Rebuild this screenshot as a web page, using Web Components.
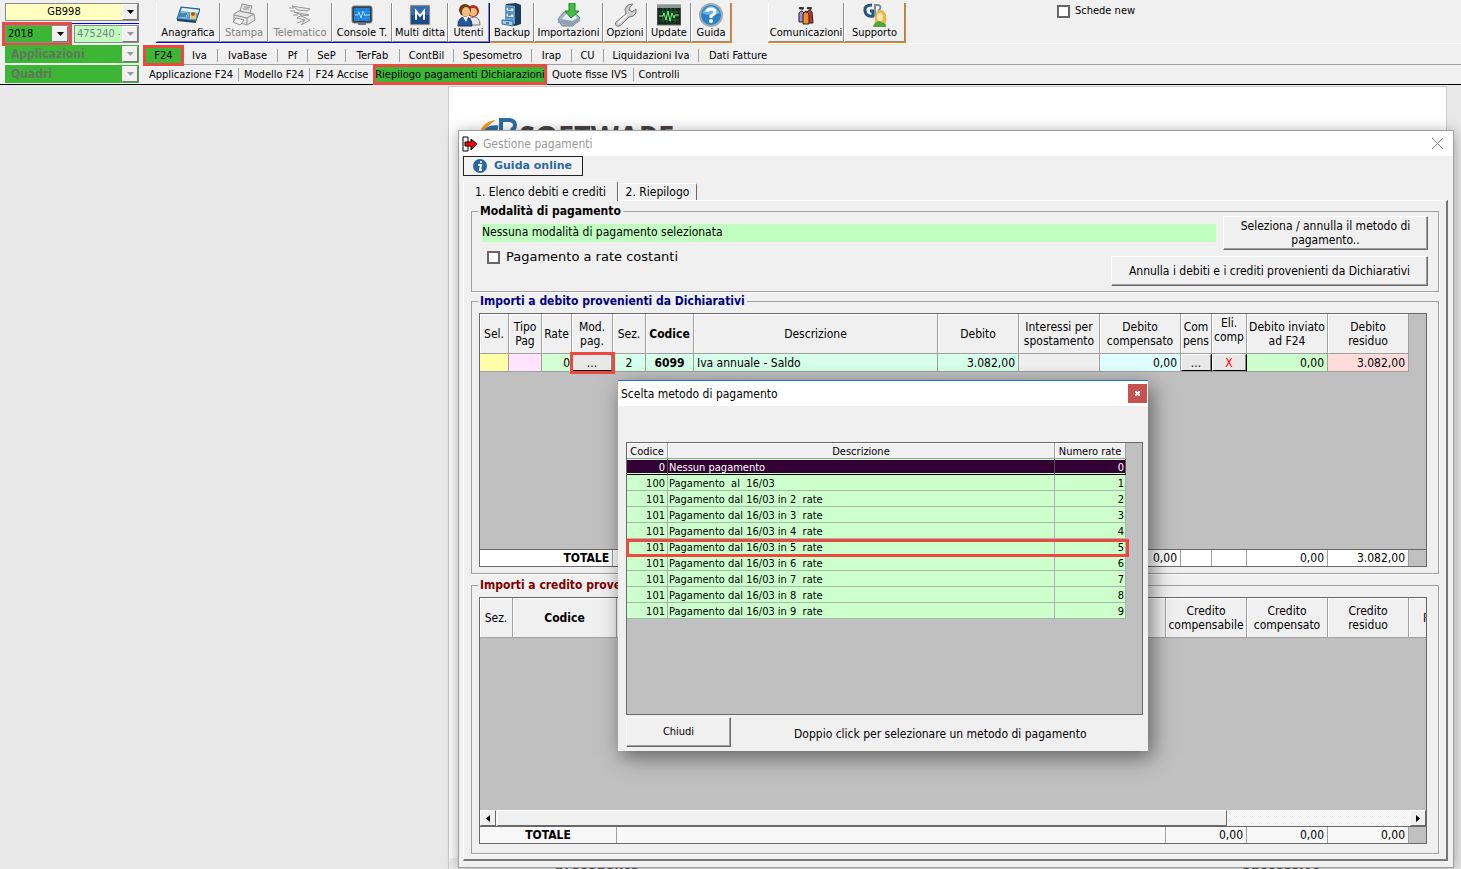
<!DOCTYPE html>
<html lang="it">
<head>
<meta charset="utf-8">
<title>GB Software - Gestione pagamenti</title>
<style>
  html, body { height: 100%; margin: 0; }
  body {
    font: 11px/14px "DejaVu Sans Condensed", "Noto Sans", sans-serif;
    color: #000; background: #e9e9e9; overflow: hidden;
    --face: #f0f0f0; --mark: #ec4a41; --green: #3cb634;
  }
</style>
</head>
<body>
<gb-app></gb-app>

<script>
const BASE = `
  *, *::before { box-sizing: border-box; }
  button, select, input { font: inherit; color: inherit; margin: 0; }
  button { cursor: pointer; }
`;

function define(name, render) {
  customElements.define(name, class extends HTMLElement {
    connectedCallback() {
      if (this.shadowRoot) return;
      const tpl = document.createElement('template');
      tpl.innerHTML = `<style>${BASE}</style>` + render(this);
      this.attachShadow({ mode: 'open' }).append(tpl.content.cloneNode(true));
    }
  });
}

/* ---------- toolbar pictures ---------- */
const ICONS = {
  card: `<path d="M5 4 24 6 20 18 1 16Z" fill="#5aa7d8" stroke="#27567f"/><path d="M6 5 23 7 22 10 5 8Z" fill="#e4f4ff"/><path d="M5 9 12 10 10 15 3 14Z" fill="#8fd0f5"/><rect x="14" y="9" width="6" height="7" fill="#f3c178"/><circle cx="17" cy="11" r="2" fill="#9b5a20"/><path d="M4 11h7M3 13h7" stroke="#123c66"/><path d="M1 16 20 18v2L1 18Z" fill="#1d3f60"/>`,
  printer: `<g fill="#e6e6e6" stroke="#8e8e8e"><path d="M8 9 10 1 20 3 18 10Z"/><path d="M2 11 7 8 22 11 23 17 15 22 2 18Z"/><path d="M2 12 15 15 22 11M15 15v6"/><path d="M4 15 12 17 8 22 1 19Z" fill="#f7f7f7"/><path d="M12 4h6M11 6h6"/></g>`,
  send: `<g fill="none" stroke="#979797"><path d="M4 3 22 6 19 8 10 7ZM6 9 21 12 13 13 22 17 13 22 17 17 9 15 14 12Z" fill="#ededed"/><path d="M1 5h5M2 8h5M5 12h5M9 20 17 17"/></g>`,
  monitor: `<rect x="2" y="3" width="20" height="17" rx="2" fill="#353c42" stroke="#787f85"/><rect x="4" y="5" width="16" height="13" fill="#1b80d8"/><path d="M5 12h3l1-3 2 6 2-7 2 5 1-1h4" stroke="#a6e5ff" fill="none"/><path d="M4 9h16M4 15h16M8 5v13M16 5v13" stroke="#4ba8ef" opacity=".5"/><path d="M8 20h8v2H8z" fill="#777"/>`,
  multi: `<rect x="2" y="2" width="20" height="20" fill="#1c4b8e" stroke="#f6cf9b"/><path d="M3 3h18v9H3z" fill="#356bb0"/><path d="M8 17V8l4 5 4-5v9" fill="none" stroke="#fff" stroke-width="2"/>`,
  users: `<circle cx="16" cy="8" r="6" fill="#b82d1c"/><circle cx="16" cy="9" r="4" fill="#f2bc83"/><path d="M11 22q0-8 6-8t6 8Z" fill="#e8e8e8" stroke="#777"/><circle cx="8" cy="7" r="6" fill="#6d3b10"/><ellipse cx="9" cy="9" rx="4" ry="5" fill="#f3bd83"/><path d="M1 23q0-9 7-9t7 9Z" fill="#2459a0" stroke="#16345f"/><path d="M6 14l3 5 2-5Z" fill="#fff"/>`,
  cabinet: `<path d="M6 1 16 0 21 2v19l-6 2-10-2Z" fill="#1b3d5a"/><path d="M5 2 15 3v18L5 19Z" fill="#6ba7d8"/><path d="M6 4 14 5v4L6 8ZM6 10 14 11v4L6 14Z" fill="#d6ecfc" stroke="#3e78a5"/><path d="M2 17 13 18v5L2 21Z" fill="#9acdf3" stroke="#2e6896"/><path d="M8 6h3M8 12h3M6 20h3" stroke="#234" />`,
  import: `<path d="M1 16 7 9h10l6 6-7 8H5Z" fill="#a9b8c4" stroke="#6d7e8b"/><path d="M5 16 9 11h8l3 4-5 3Z" fill="#e4edf3"/><path d="M1 16 16 18 23 15v3l-7 5L1 20Z" fill="#8fa2b0"/><path d="M12 0h6v8h4l-8 7-6-7h4Z" fill="#44bd43" stroke="#20842b"/>`,
  wrench: `<path d="M20 1 15 2 12 6 13 11 3 19Q1 22 4 23 6 24 8 22L16 14Q21 14 23 10V6L19 9 16 7 17 4Z" fill="#cfcfcf" stroke="#747474"/><path d="M14 12 5 20" stroke="#f6f6f6" stroke-width="2"/>`,
  update: `<rect x="0" y="2" width="24" height="20" fill="#1c241e" stroke="#66706a"/><path d="M0 2h24v3H0z" fill="#8d9892"/><path d="M2 9h20M2 13h20M2 17h20M6 5v15M10 5v15M14 5v15M18 5v15" stroke="#176a2b"/><path d="M2 13h4l1-3 2 7 2-9 2 10 2-8 2 5 1-3h4" fill="none" stroke="#72f07c"/>`,
  help: `<circle cx="12" cy="12" r="11" fill="#2a81c6" stroke="#a1adb5" stroke-width="2"/><path d="M3 10q9-14 18 0-9 4-18 0Z" fill="#6db2ea"/><path d="M8 9q0-3 4-3t4 3q0 2-4 4v2" fill="none" stroke="#fff" stroke-width="3"/><circle cx="12" cy="18" r="2" fill="#fff"/>`,
  people: `<path d="M5 10q3-4 5 0v9H5Z" fill="#9d8be0" stroke="#222"/><path d="M13 9q3-4 5 0l1 11h-5Z" fill="#c43424" stroke="#222"/><path d="M9 11q3-4 6 0v10H9Z" fill="#f68b20" stroke="#222"/><path d="M5 6q-1-2 1-2h3q2 0 0 3ZM13 6q-1-2 1-2h3q2 0 0 3ZM10 9q2-3 4 0Z" fill="#333"/>`,
  support: `<path d="M9 2Q1 2 2 8t8 5V8H7" fill="none" stroke="#25567f" stroke-width="3"/><path d="M12 12V2h4q3 2 0 5 4 2 0 5Z" fill="none" stroke="#7a8fa0" stroke-width="2"/><path d="M12 20q-1-14 6-13t5 13Z" fill="#e6b949"/><ellipse cx="17" cy="14" rx="3" ry="4" fill="#f9e6b4"/><path d="M10 24q1-5 6-6l7 3v3Z" fill="#54a537"/>`
};

define('gb-tool', el => `
  <style>
    :host { display: block; flex: none; }
    button { display: flex; flex-direction: column; align-items: center; justify-content: space-between;
      width: 100%; height: 39px; padding: 0 0 3px; line-height: 11px; white-space: nowrap; background: var(--face);
      border: solid; border-width: 0 1px 1px 1px; border-color: #fff #8c8c8c #8c8c8c #fff; }
    button:disabled { color: #808080; cursor: default; }
    svg { width: 24px; height: 24px; display: block; flex: none; }
  </style>
  <button type="button" ${el.hasAttribute('disabled') ? 'disabled' : ''}>
    <svg viewBox="0 0 24 24" aria-hidden="true">${ICONS[el.getAttribute('icon')]}</svg><slot></slot>
  </button>`);

define('gb-combo', el => {
  const off = el.hasAttribute('disabled');
  return `
  <style>
    :host { display: block; position: relative; height: 18px; min-width: 0; }
    select { appearance: none; display: block; width: 100%; height: 100%; border: 1px solid #8a8a8a; border-radius: 0;
      padding: 0 18px 0 2px; background: var(--fill, #ffffc0); outline: 0; opacity: 1; color: var(--ink, #000); }
    :host([center]) select { text-align-last: center; }
    :host([heavy]) select { font-weight: bold; font-size: 12px; padding-left: 5px; border-color: var(--fill); }
    :host([marked]) { outline: 3px solid var(--mark); }
    .arrow { position: absolute; top: 1px; right: 1px; bottom: 1px; width: 16px; background: var(--face);
      border: 1px solid; border-color: #fff #777 #777 #fff; display: grid; place-items: center; pointer-events: none; }
    svg { width: 7px; height: 4px; display: block; }
  </style>
  <select aria-label="${el.getAttribute('label')}" ${off ? 'disabled' : ''}><option>${el.getAttribute('value')}</option></select>
  <span class="arrow"><svg viewBox="0 0 7 4" aria-hidden="true"><path d="M0 0h7L3.500 4Z" fill="${off ? '#999' : '#000'}"/></svg></span>`;
});

define('gb-header', () => {
  const link = ([t, w, cls]) => `<a href="#" class="${cls || ''}" style="width:${w}px">${t}</a>`;
  const areas = [['F24', 35, 'on'], ['Iva', 36], ['IvaBase', 60], ['Pf', 30], ['SeP', 38], ['TerFab', 54], ['ContBil', 54],
    ['Spesometro', 78], ['Irap', 40], ['CU', 32], ['Liquidazioni Iva', 95], ['Dati Fatture', 78, 'last']];
  const forms = [['Applicazione F24', 95], ['Modello F24', 71], ['F24 Accise', 64, 'last'], ['Riepilogo pagamenti Dichiarazioni', 170, 'on'],
    ['Quote fisse IVS', 88], ['Controlli', 50, 'last']];
  return `
  <style>
    :host { display: grid; grid-template-columns: 144px minmax(0, 1fr); height: 85px; background: var(--face);
      border-bottom: 1px solid #000; }
    .filters { display: grid; grid-template-rows: 21px 20px 20px 20px; padding: 3px 5px 0; align-items: center; }
    .firm { height: 21px; border-bottom: 1px solid #00f; }
    .pair { display: grid; grid-template-columns: 64px 65px; gap: 5px; }
    .green { --fill: var(--green); --ink: #60785e; }
    .right { display: grid; grid-template-rows: 44px 21px 19px; }
    .tools { display: flex; padding: 3px 0 0 12px; align-items: flex-start; border-bottom: 1px solid #fff; }
    .set { display: flex; border: solid #0000e6; border-width: 0 1px 2px 0; height: 40px; }
    .set.orange { border-color: #ff8000; }
    .gap { width: 36px; }
    .new { margin-left: 151px; display: flex; gap: 5px; align-items: center; height: 16px; }
    input { appearance: none; width: 13px; height: 13px; border: 2px solid #666; background: #fff; }
    nav { display: flex; align-items: center; }
    .areas { border-bottom: 1px solid #a0a0a0; padding: 3px 0 0 1px; }
    a { color: inherit; text-decoration: none; text-align: center; white-space: nowrap; border-right: 1px solid #a0a0a0; line-height: 13px; }
    a.last { border: 0; }
    a.on { background: var(--green); outline: 3px solid var(--mark); border: 0; line-height: 17px; z-index: 1; outline-offset: -1px; margin: 0 1px; }
    .areas a.on { line-height: 15px; outline-offset: 0; }
  </style>
  <div class="filters">
    <div class="firm"><gb-combo label="Ditta" value="GB998" center></gb-combo></div>
    <div class="pair">
      <gb-combo label="Anno" value="2018" marked style="--fill:var(--green)"></gb-combo>
      <gb-combo label="Codice" value="475240 -" disabled style="--fill:#c0ffc0;--ink:#808080"></gb-combo>
    </div>
    <gb-combo class="green" label="Applicazioni" value="Applicazioni" heavy disabled></gb-combo>
    <gb-combo class="green" label="Quadri" value="Quadri" heavy disabled></gb-combo>
  </div>
  <div class="right">
    <div class="tools">
      <div class="set">
        <gb-tool icon="card" style="width:64px">Anagrafica</gb-tool>
        <gb-tool icon="printer" style="width:48px" disabled>Stampa</gb-tool>
        <gb-tool icon="send" style="width:64px" disabled>Telematico</gb-tool>
        <gb-tool icon="monitor" style="width:60px">Console T.</gb-tool>
        <gb-tool icon="multi" style="width:56px">Multi ditta</gb-tool>
        <gb-tool icon="users" style="width:41px">Utenti</gb-tool>
      </div>
      <div class="set orange">
        <gb-tool icon="cabinet" style="width:44px">Backup</gb-tool>
        <gb-tool icon="import" style="width:69px">Importazioni</gb-tool>
        <gb-tool icon="wrench" style="width:44px">Opzioni</gb-tool>
        <gb-tool icon="update" style="width:44px">Update</gb-tool>
        <gb-tool icon="help" style="width:40px">Guida</gb-tool>
      </div>
      <div class="gap"></div>
      <div class="set orange">
        <gb-tool icon="people" style="width:76px">Comunicazioni</gb-tool>
        <gb-tool icon="support" style="width:61px">Supporto</gb-tool>
      </div>
      <label class="new"><input type="checkbox">Schede new</label>
    </div>
    <nav class="areas" aria-label="Applicazioni">${areas.map(link).join('')}</nav>
    <nav class="forms" aria-label="Quadri">${forms.map(link).join('')}</nav>
  </div>`;
});

/* ---------- shared pieces ---------- */
define('gb-button', () => `
  <style>
    :host { display: block; flex: none; }
    button { width: 100%; height: 100%; padding: 0 12px; line-height: 14px; background: var(--face);
      border: 1px solid; border-color: #fff #696969 #696969 #fff; box-shadow: inset -1px -1px #a0a0a0; }
  </style>
  <button type="button"><slot></slot></button>`);

define('gb-group', el => `
  <style>
    :host { display: flex; flex-direction: column; min-height: 0; }
    fieldset { flex: 1; min-width: 0; min-height: 0; margin: 0; padding: var(--pad, 8px 11px 6px 7px);
      border: 1px solid #a0a0a0; box-shadow: 1px 1px #fff; display: flex; flex-direction: column; }
    legend { padding: 0 2px; margin-left: -1px; line-height: 7px; font-weight: bold; color: var(--title, #000); white-space: nowrap; }
  </style>
  <fieldset><legend>${el.getAttribute('heading')}</legend><slot></slot></fieldset>`);

const GRID = `
  :host { display: flex; flex-direction: column; flex: 1; min-height: 0; background: #c0c0c0; border: 1px solid #696969; overflow: hidden; }
  .fill { flex: 1; }
  table { border-collapse: separate; border-spacing: 0; table-layout: fixed; width: 100%; }
  th, td { padding: 0 3px; border-right: 1px solid #a0a0a0; border-bottom: 1px solid #a0a0a0; overflow: hidden; white-space: nowrap; }
  th { font-weight: normal; background: var(--face); padding: 1px 0 0; box-shadow: inset 1px 1px #fff; }
  td { background: var(--cell); text-align: left; }
  .c { text-align: center; } .n { text-align: right; } .b { font-weight: bold; }
  .none { background: transparent; border: 0; box-shadow: none; }
  .total { border-top: 1px solid #696969; background: #c0c0c0; }
  .total td { height: 16px; border-bottom: 0; --cell: #fff; }
`;
const cols = list => `<colgroup>${list.map(w => `<col${w ? ` style="width:${w}px"` : ''}>`).join('')}</colgroup>`;

define('gb-debits', () => {
  const c = cols([29, 33, 30, 41, 33, 48, 0, 81, 81, 81, 31, 35, 81, 81, 17]);
  return `
  <style>${GRID}
    th { height: 40px; } .row td { height: 18px; }
    td.act { padding: 0; overflow: visible; }
    td button { display: block; width: 100%; height: 17px; padding: 0; line-height: 14px; background: #e8e8e8; border: 1px solid;
      border-color: #fff #888 #000 #fff; }
    .mark { outline: 3px solid var(--mark); outline-offset: -1px; position: relative; }
    .red { color: #f00; } th.up { padding-bottom: 8px; }
    .row .act { border-right-color: #000; }
  </style>
  <table>${c}
    <thead><tr><th>Sel.</th><th>Tipo<br>Pag</th><th>Rate</th><th>Mod.<br>pag.</th><th>Sez.</th><th class="b">Codice</th><th>Descrizione</th>
      <th>Debito</th><th>Interessi per<br>spostamento</th><th>Debito<br>compensato</th><th>Com<br>pens</th><th class="up">Eli.<br>comp</th>
      <th>Debito inviato<br>ad F24</th><th>Debito<br>residuo</th><th class="none"></th></tr></thead>
    <tbody><tr class="row">
      <td style="--cell:#ffffaa"></td><td style="--cell:#ffe3ff"></td><td class="n" style="--cell:#d4ffd4;padding-right:1px">0</td>
      <td class="act mark"><button type="button" aria-label="Modalità di pagamento">...</button></td>
      <td class="c" style="--cell:#d7ffeb">2</td><td class="c b" style="--cell:#d7ffeb">6099</td><td style="--cell:#d7ffeb">Iva annuale - Saldo</td>
      <td class="n" style="--cell:#d7ffeb">3.082,00</td><td style="--cell:#f0f0f0"></td><td class="n" style="--cell:#e0ffff">0,00</td>
      <td class="act"><button type="button" aria-label="Compensa">...</button></td><td class="act"><button type="button" class="red">X</button></td>
      <td class="n" style="--cell:#ccffcc">0,00</td><td class="n" style="--cell:#ffdcdc">3.082,00</td><td class="none"></td></tr></tbody>
  </table>
  <div class="fill"></div>
  <table class="total">${c}<tbody><tr><td colspan="4" class="n b">TOTALE</td><td colspan="3"></td><td></td><td></td><td class="n">0,00</td><td></td><td></td>
    <td class="n">0,00</td><td class="n">3.082,00</td><td class="none"></td></tr></tbody></table>`;
});

define('gb-credits', () => {
  const c = cols([33, 104, 0, 81, 81, 81, 17]);
  return `
  <style>${GRID}
    th { height: 40px; }
    .total td { --cell: #f8f8f8; }
    th.cut { text-align: left; padding-left: 14px; border-right: 0; }
    .scroll { display: flex; height: 16px; background: repeating-conic-gradient(#fff 0 25%, #eee 0 50%) 0 0 / 2px 2px; }
    .scroll button { width: 16px; padding: 0; display: grid; place-items: center; background: var(--face); border: 1px solid; border-color: #fff #696969 #696969 #fff; }
    .thumb { flex: 732; background: var(--face); border: 1px solid; border-color: #fff #696969 #696969 #fff; margin-left: 1px; }
    .track { flex: 184; }
    svg { width: 4px; height: 7px; display: block; }
  </style>
  <table>${c}<thead><tr><th>Sez.</th><th class="b">Codice</th><th></th><th>Credito<br>compensabile</th><th>Credito<br>compensato</th>
    <th>Credito<br>residuo</th><th class="cut">P</th></tr></thead></table>
  <div class="fill"></div>
  <div class="scroll">
    <button type="button" aria-label="Scorri a sinistra"><svg viewBox="0 0 4 7"><path d="M4 0v7L0 3.500Z"/></svg></button>
    <div class="thumb"></div><div class="track"></div>
    <button type="button" aria-label="Scorri a destra"><svg viewBox="0 0 4 7"><path d="M0 0v7l4-3.500Z"/></svg></button>
  </div>
  <table class="total">${c}<tbody><tr><td colspan="2" class="c b">TOTALE</td><td></td><td class="n">0,00</td><td class="n">0,00</td><td class="n">0,00</td>
    <td class="none"></td></tr></tbody></table>`;
});

define('gb-methods', () => {
  const rows = [[0, 'Nessun pagamento', 0], [100, 'Pagamento  al  16/03', 1]];
  for (let i = 2; i < 10; i++) rows.push([101, `Pagamento dal 16/03 in ${i}  rate`, i]);
  return `
  <style>${GRID}
    :host { --cell: #ccffcc; }
    table { line-height: 13px; }
    th, td { height: 16px; padding: 1px 1px 0; } td { white-space: pre; border-color: #a8b8a8; } td:first-child { padding-right: 2px; }
    tr.sel td { background: #330033; color: #fff; border-right-color: #555; border-bottom: 1px solid #000; box-shadow: inset 0 1px #ccffcc, inset 0 -1px #ccffcc; }
    tr.pick { position: relative; }
    tr.pick td { overflow: visible; }
    tr.pick td:first-child::before { content: ""; position: absolute; inset: 0 13px -2px -1px; border: 3px solid var(--mark); pointer-events: none; }
    :host { overflow: visible; }
  </style>
  <table>${cols([41, 0, 71, 16])}
    <thead><tr><th>Codice</th><th>Descrizione</th><th>Numero rate</th><th class="none"></th></tr></thead>
    <tbody>${rows.map((r, i) => `<tr class="${i === 0 ? 'sel' : i === 5 ? 'pick' : ''}"><td class="n">${r[0]}</td><td>${r[1]}</td><td class="n">${r[2]}</td></tr>`).join('')}</tbody>
  </table>`;
});

/* ---------- windows ---------- */
define('gb-payments', () => `
  <style>
    :host { display: flex; flex-direction: column; background: var(--face); border: 1px solid #a0a0a0;
      box-shadow: 0 2px 14px rgba(0,0,0,.35); font-size: 12px; }
    header { display: flex; align-items: center; height: 25px; flex: none; background: #fff; padding: 0 9px 0 3px; color: #999; }
    header svg { width: 16px; height: 16px; margin-right: 5px; }
    header button { margin-left: auto; width: 12px; height: 12px; padding: 0; border: 0; background: none; }
    header button svg { width: 11px; height: 11px; display: block; margin: 0; }
    .body { flex: 1; min-height: 0; display: flex; flex-direction: column; padding: 0 5px 6px 4px; }
    .guide { align-self: flex-start; display: flex; align-items: center; gap: 7px; width: 120px; height: 20px; padding: 0 0 0 9px; background: #f3f3f3;
      border: 1px solid #222; color: #2b68a0; font-family: "DejaVu Sans", sans-serif; font-size: 11px; font-weight: bold; white-space: nowrap; text-decoration: none; }
    .guide svg { width: 14px; height: 14px; }
    .tabs { display: flex; align-items: flex-end; height: 19px; margin-top: 5px; flex: none; }
    .tabs button { height: 17px; padding: 0; background: var(--face); border: 1px solid; border-color: #fff #696969 transparent #fff; border-bottom: 0; border-radius: 2px 2px 0 0; white-space: nowrap; width: 79px; }
    .tabs button.on { height: 20px; margin-bottom: -1px; width: 155px; z-index: 1; }
    .panel { flex: 1; min-height: 0; display: flex; flex-direction: column; padding: 7px 7px 5px 7px; border: solid; border-width: 1px 2px 2px 1px; border-color: #fff #777 #777 #fff; }
    .one { --pad: 1px 10px 0 7px; flex: none; height: 84px; }
    .two { --title: #000080; margin-top: 6px; flex: 276; }
    .three { --title: #800000; margin-top: 8px; flex: 272; --pad: 8px 11px 9px 7px; }
    .line { display: flex; align-items: center; gap: 7px; padding-left: 3px; }
    .status { flex: 1; height: 18px; line-height: 16px; background: #c0ffc0; }
    .rates { align-items: flex-start; justify-content: space-between; padding-left: 8px; }
    .rates label { display: flex; align-items: center; gap: 6px; height: 14px; font-family: "DejaVu Sans", sans-serif; font-size: 13px; }
    input { appearance: none; width: 13px; height: 13px; border: 2px solid #666; background: #fff; }
    .method { width: 205px; height: 34px; }
    .undo { width: 317px; height: 30px; margin-top: 6px; }
  </style>
  <header>
    <svg viewBox="0 0 16 16" aria-hidden="true"><path d="M1 1h5v14H1z" fill="#fff" stroke="#000"/><path d="M3 6h6V3l6 5-6 6v-4H3Z" fill="#f00" stroke="#000"/></svg>
    Gestione pagamenti
    <button type="button" aria-label="Chiudi"><svg viewBox="0 0 11 11"><path d="M0 0 11 11M11 0 0 11" stroke="#888"/></svg></button>
  </header>
  <div class="body">
    <a class="guide" href="#"><svg viewBox="0 0 14 14" aria-hidden="true"><circle cx="7" cy="7" r="7" fill="#2b68a0"/><circle cx="8" cy="3" r="1" fill="#fff"/><path d="M5 6h3L7 11h2" stroke="#fff" stroke-width="2" fill="none"/></svg>Guida online</a>
    <div class="tabs" role="tablist"><button type="button" role="tab" aria-selected="true" class="on">1. Elenco debiti e crediti</button><button type="button" role="tab">2. Riepilogo</button></div>
    <div class="panel">
      <gb-group class="one" heading="Modalità di pagamento">
        <div class="line"><div class="status">Nessuna modalità di pagamento selezionata</div><gb-button class="method">Seleziona / annulla il metodo di pagamento..</gb-button></div>
        <div class="line rates"><label><input type="checkbox">Pagamento a rate costanti</label><gb-button class="undo">Annulla i debiti e i crediti provenienti da Dichiarativi</gb-button></div>
      </gb-group>
      <gb-group class="two" heading="Importi a debito provenienti da Dichiarativi"><gb-debits></gb-debits></gb-group>
      <gb-group class="three" heading="Importi a credito provenienti da Dichiarativi"><gb-credits></gb-credits></gb-group>
    </div>
  </div>`);

define('gb-chooser', () => `
  <style>
    :host { display: flex; flex-direction: column; background: var(--face); border-top: 1px solid #1a78d0; box-shadow: 4px 6px 20px rgba(0,0,0,.5); font-size: 12px; }
    header { display: flex; align-items: center; justify-content: space-between; height: 25px; background: #fff; padding: 0 1px 0 3px; }
    header button { width: 19px; height: 19px; padding: 0; border: 0; background: #c75050; display: grid; place-items: center; }
    header svg { width: 5px; height: 5px; }
    .body { flex: 1; display: flex; flex-direction: column; padding: 36px 5px 4px 8px; }
    gb-methods { font-size: 11px; }
    footer { display: flex; align-items: center; gap: 63px; margin-top: 2px; }
    footer span { padding-top: 3px; }
    .close { width: 105px; height: 30px; font-size: 11px; }
  </style>
  <header>Scelta metodo di pagamento<button type="button" aria-label="Chiudi"><svg viewBox="0 0 5 5"><path d="M0 0 5 5M5 0 0 5" stroke="#fff" stroke-width="2"/></svg></button></header>
  <div class="body"><gb-methods></gb-methods>
    <footer><gb-button class="close">Chiudi</gb-button><span>Doppio click per selezionare un metodo di pagamento</span></footer></div>`);

define('gb-page', () => `
  <style>
    :host { display: flex; flex-direction: column; justify-content: space-between; background: #fff; border: 1px solid #ccc; border-bottom: 0; }
    .logo { display: flex; align-items: flex-start; padding: 30px 0 0 30px; color: #484244; font: bold 29px/38px "Open Sans", sans-serif; }
    .logo svg { width: 40px; height: 34px; }
    .steps { display: flex; justify-content: space-between; padding: 0 125px 0 106px; color: #555; font: bold 13px/14px "DejaVu Sans", sans-serif; background: #f0f0f0; height: 11px; }
  </style>
  <div class="logo"><svg viewBox="0 0 40 34" aria-hidden="true"><path d="M0 17Q4 4 17 3 7 9 5 18Z" fill="#f09a2e"/><path d="M19 11Q7 9 6 20t13 9" fill="none" stroke="#2c6da8" stroke-width="5"/><path d="M22 26V3h9q5 1 5 5t-4 5q6 1 6 7t-7 6Z" fill="none" stroke="#2c6da8" stroke-width="4"/></svg>SOFTWARE</div>
  <div class="steps"><span>precedente</span><span>successivo</span></div>`);

define('gb-app', () => `
  <style>
    :host { display: flex; flex-direction: column; height: 100vh; }
    main { flex: 1; position: relative; min-height: 0; display: flex; overflow: hidden; }
    gb-page { flex: 1; margin: 1px 14px 0 448px; }
    gb-payments { position: absolute; left: 458px; right: 7px; top: 45px; bottom: 1px; }
    gb-chooser { position: absolute; left: 618px; top: 295px; width: 530px; height: 371px; }
  </style>
  <gb-header></gb-header>
  <main><gb-page></gb-page><gb-payments></gb-payments><gb-chooser></gb-chooser></main>`);
</script>
</body>
</html>
